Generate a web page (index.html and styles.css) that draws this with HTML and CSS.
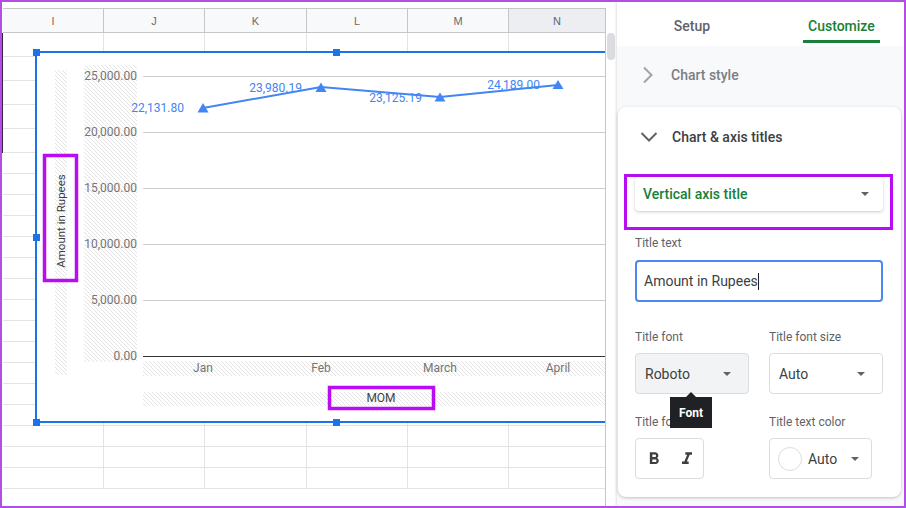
FILE: index.html
```html
<!DOCTYPE html>
<html lang="en">
<head>
    <meta charset="UTF-8">
    <meta name="viewport" content="width=device-width, initial-scale=1.0">
    <title>Chart editor - Customize</title>
    <link rel="stylesheet" href="styles.css">
</head>
<body>
<div class="frame">
    <div class="sheet">
        <div class="sel-bar"></div>
        <div class="grid">
            <div class="col-heads">
                <div class="ch w1 red">I</div>
                <div class="ch w2">J</div>
                <div class="ch w3">K</div>
                <div class="ch w4 red">L</div>
                <div class="ch w5">M</div>
                <div class="ch w6 picked">N</div>
            </div>
            <div class="rows">
                <div class="row tall"><span class="w1"></span><span class="w2"></span><span class="w3"></span><span class="w4"></span><span class="w5"></span><span class="w6"></span></div>
                <div class="row tall"><span class="w1"></span><span class="w2"></span><span class="w3"></span><span class="w4"></span><span class="w5"></span><span class="w6"></span></div>
                <div class="row tall"><span class="w1"></span><span class="w2"></span><span class="w3"></span><span class="w4"></span><span class="w5"></span><span class="w6"></span></div>
                <div class="row tall"><span class="w1"></span><span class="w2"></span><span class="w3"></span><span class="w4"></span><span class="w5"></span><span class="w6"></span></div>
                <div class="row tall"><span class="w1"></span><span class="w2"></span><span class="w3"></span><span class="w4"></span><span class="w5"></span><span class="w6"></span></div>
                <div class="row"><span class="w1"></span><span class="w2"></span><span class="w3"></span><span class="w4"></span><span class="w5"></span><span class="w6"></span></div>
                <div class="row"><span class="w1"></span><span class="w2"></span><span class="w3"></span><span class="w4"></span><span class="w5"></span><span class="w6"></span></div>
                <div class="row"><span class="w1"></span><span class="w2"></span><span class="w3"></span><span class="w4"></span><span class="w5"></span><span class="w6"></span></div>
                <div class="row"><span class="w1"></span><span class="w2"></span><span class="w3"></span><span class="w4"></span><span class="w5"></span><span class="w6"></span></div>
                <div class="row"><span class="w1"></span><span class="w2"></span><span class="w3"></span><span class="w4"></span><span class="w5"></span><span class="w6"></span></div>
                <div class="row"><span class="w1"></span><span class="w2"></span><span class="w3"></span><span class="w4"></span><span class="w5"></span><span class="w6"></span></div>
                <div class="row"><span class="w1"></span><span class="w2"></span><span class="w3"></span><span class="w4"></span><span class="w5"></span><span class="w6"></span></div>
                <div class="row"><span class="w1"></span><span class="w2"></span><span class="w3"></span><span class="w4"></span><span class="w5"></span><span class="w6"></span></div>
                <div class="row"><span class="w1"></span><span class="w2"></span><span class="w3"></span><span class="w4"></span><span class="w5"></span><span class="w6"></span></div>
                <div class="row"><span class="w1"></span><span class="w2"></span><span class="w3"></span><span class="w4"></span><span class="w5"></span><span class="w6"></span></div>
                <div class="row"><span class="w1"></span><span class="w2"></span><span class="w3"></span><span class="w4"></span><span class="w5"></span><span class="w6"></span></div>
                <div class="row"><span class="w1"></span><span class="w2"></span><span class="w3"></span><span class="w4"></span><span class="w5"></span><span class="w6"></span></div>
                <div class="row"><span class="w1"></span><span class="w2"></span><span class="w3"></span><span class="w4"></span><span class="w5"></span><span class="w6"></span></div>
                <div class="row"><span class="w1"></span><span class="w2"></span><span class="w3"></span><span class="w4"></span><span class="w5"></span><span class="w6"></span></div>
                <div class="row"><span class="w1"></span><span class="w2"></span><span class="w3"></span><span class="w4"></span><span class="w5"></span><span class="w6"></span></div>
                <div class="row"><span class="w1"></span><span class="w2"></span><span class="w3"></span><span class="w4"></span><span class="w5"></span><span class="w6"></span></div>
            </div>

            <!-- embedded chart, floats over the cells -->
            <div class="chart">
                <svg class="plot" width="620" height="368">
                    <defs>
                        <pattern id="hatch" width="4" height="4" patternUnits="userSpaceOnUse">
                            <path d="M-1,-1 l2,2 M0,0 l4,4 M3,3 l2,2" stroke="#e4e4e4" stroke-width="1"/>
                        </pattern>
                    </defs>
                    <g transform="translate(-37 -53)">
                        <rect x="55" y="70" width="12" height="305" fill="url(#hatch)"/>
                        <rect x="84" y="65" width="53" height="297" fill="url(#hatch)"/>
                        <rect x="143" y="361" width="470" height="15" fill="url(#hatch)"/>
                        <rect x="143" y="392" width="470" height="14" fill="url(#hatch)"/>

                        <path d="M143 76.5H640M143 132.5H640M143 188.5H640M143 244.5H640M143 300.5H640" stroke="#cccccc" stroke-width="1"/>
                        <path d="M143 356.5H640" stroke="#333333" stroke-width="1"/>

                        <g class="ylab">
                            <text x="137" y="79.5">25,000.00</text>
                            <text x="137" y="135.5">20,000.00</text>
                            <text x="137" y="191.5">15,000.00</text>
                            <text x="137" y="247.5">10,000.00</text>
                            <text x="137" y="303.5">5,000.00</text>
                            <text x="137" y="359.5">0.00</text>
                        </g>
                        <g class="xlab">
                            <text x="203" y="371.5">Jan</text>
                            <text x="321" y="371.5">Feb</text>
                            <text x="440" y="371.5">March</text>
                            <text x="558" y="371.5">April</text>
                        </g>

                        <polyline points="203,108 321,87 440,97 558,85" fill="none" stroke="#4285f4" stroke-width="2"/>
                        <g fill="#4285f4">
                            <path d="M203 103L208.5 112.5H197.5Z"/>
                            <path d="M321 82.5L326.5 92H315.5Z"/>
                            <path d="M440 92.5L445.5 101.5H434.5Z"/>
                            <path d="M558 80L563.5 89H552.5Z"/>
                        </g>
                        <g class="dlab">
                            <text x="184" y="112">22,131.80</text>
                            <text x="302" y="92">23,980.19</text>
                            <text x="422" y="101.5">23,125.19</text>
                            <text x="540" y="88.5">24,189.00</text>
                        </g>

                        <text class="vtitle" transform="translate(64.5 221) rotate(-90)">Amount in Rupees</text>
                        <rect class="mark" x="44.5" y="155.5" width="32" height="125"/>

                        <text class="htitle" x="381" y="402">MOM</text>
                        <rect class="mark" x="329.5" y="387.5" width="104" height="21"/>
                    </g>
                </svg>
                <span class="handle h-tl"></span>
                <span class="handle h-tm"></span>
                <span class="handle h-lm"></span>
                <span class="handle h-bl"></span>
                <span class="handle h-bm"></span>
            </div>
        </div>
        <div class="vscroll"><div class="thumb"></div></div>
    </div>

    <aside class="panel">
        <div class="tabs">
            <div class="tab">Setup</div>
            <div class="tab active">Customize</div>
        </div>

        <div class="section-row closed">
            <svg class="chev" width="24" height="24" viewBox="0 0 24 24"><path d="M8 4.5L15.5 12L8 19.5" fill="none" stroke="#a0a4a8" stroke-width="2"/></svg>
            <span>Chart style</span>
        </div>

        <div class="card">
            <div class="section-row">
                <svg class="chev" width="24" height="24" viewBox="0 0 24 24"><path d="M4.5 8L12 15.5L19.5 8" fill="none" stroke="#5f6368" stroke-width="2"/></svg>
                <span>Chart &amp; axis titles</span>
            </div>

            <div class="card-body">
                <div class="highlight">
                    <div class="dropdown">
                        <span>Vertical axis title</span>
                        <i class="caret"></i>
                    </div>
                </div>

                <div class="label first">Title text</div>
                <div class="text-input">Amount in Rupees<i class="cursor"></i></div>

                <div class="two-col">
                    <div>
                        <div class="label">Title font</div>
                        <div class="select grey">
                            <span>Roboto</span><i class="caret"></i>
                            <div class="tooltip">Font</div>
                        </div>
                    </div>
                    <div>
                        <div class="label">Title font size</div>
                        <div class="select"><span>Auto</span><i class="caret"></i></div>
                    </div>
                    <div>
                        <div class="label">Title format</div>
                        <div class="format-box">
                            <svg width="20" height="20" viewBox="0 0 24 24"><path fill="#3c4043" d="M15.6 10.79c.97-.67 1.65-1.77 1.65-2.79 0-2.26-1.75-4-4-4H7v14h7.04c2.09 0 3.710-1.7 3.71-3.79 0-1.52-.86-2.82-2.15-3.42zM10 6.5h3c.83 0 1.5.67 1.5 1.5s-.67 1.5-1.5 1.5h-3v-3zm3.5 9H10v-3h3.5c.83 0 1.5.67 1.5 1.5s-.67 1.5-1.5 1.5z"/></svg>
                            <svg width="20" height="20" viewBox="0 0 24 24"><path fill="#3c4043" d="M10 4v3h2.21l-3.42 8H6v3h8v-3h-2.21l3.42-8H18V4z"/></svg>
                        </div>
                    </div>
                    <div>
                        <div class="label">Title text color</div>
                        <div class="color-box">
                            <span class="swatch"></span>
                            <span>Auto</span>
                            <i class="caret"></i>
                        </div>
                    </div>
                </div>
            </div>
        </div>
    </aside>
</div>
</body>
</html>
```

FILE: styles.css
```css
* {
    box-sizing: border-box;
}

body {
    margin: 0;
    font-family: Roboto, 'Liberation Sans', sans-serif;
    background-color: #fff;
}

.frame {
    width: 906px;
    height: 508px;
    border: 2px solid #b34ee2;
    display: flex;
    overflow: hidden;
    background-color: #fff;
}

/* ---------- spreadsheet side ---------- */

.sheet {
    position: relative;
    flex: none;
    width: 615px;
    padding-top: 6px;
    display: flex;
}

.sel-bar {
    position: absolute;
    left: 0;
    top: 31px;
    width: 1px;
    height: 120px;
    background-color: #3a2346;
}

.grid {
    position: relative;
    margin-left: 1px;
    width: 603px;
    border-right: 1px solid #c6c6c6;
    overflow: hidden;
}

.w1 { width: 101px; }
.w2 { width: 101px; }
.w3 { width: 102px; }
.w4 { width: 101px; }
.w5 { width: 101px; }
.w6 { flex: 1; border-right: none !important; }

.col-heads {
    display: flex;
    height: 25px;
    border-top: 1px solid #c6c6c6;
    border-bottom: 1px solid #c6c6c6;
    background-color: #f8f9fa;
}

.ch {
    display: flex;
    align-items: center;
    justify-content: center;
    border-right: 1px solid #c6c6c6;
    font: 11px 'Liberation Sans', Arial, sans-serif;
    color: #6b6b6b;
}

.ch.red {
    color: #9c5a52;
}

.ch.picked {
    background-color: #eceef1;
    color: #5a6580;
}

.row {
    display: flex;
    height: 21px;
    border-bottom: 1px solid #e2e3e3;
}

.row.tall {
    height: 24px;
}

.row span {
    border-right: 1px solid #e2e3e3;
}

.vscroll {
    flex: none;
    width: 11px;
}

.thumb {
    margin: 25px 0 0 1px;
    width: 8px;
    height: 27px;
    border-radius: 4px;
    background-color: #dadce0;
}

/* ---------- chart ---------- */

.chart {
    position: absolute;
    left: 32px;
    top: 43px;
    width: 650px;
    height: 372px;
    border: 2px solid #1a73e8;
    background-color: #fff;
}

.plot {
    display: block;
    font-family: Roboto, sans-serif;
    font-size: 12px;
}

.ylab text {
    fill: #757575;
    text-anchor: end;
}

.xlab text {
    fill: #757575;
    text-anchor: middle;
}

.dlab text {
    fill: #4285f4;
    text-anchor: end;
}

.vtitle {
    fill: #3a3a3a;
    font-size: 11.5px;
    text-anchor: middle;
}

.htitle {
    fill: #444;
    text-anchor: middle;
}

.mark {
    fill: none;
    stroke: #b80cf2;
    stroke-width: 3.5;
}

.handle {
    position: absolute;
    width: 7px;
    height: 7px;
    background-color: #1a73e8;
}

.h-tl { left: -4px; top: -4px; }
.h-tm { left: 296px; top: -4px; }
.h-lm { left: -4px; top: 181px; }
.h-bl { left: -4px; top: 366px; }
.h-bm { left: 296px; top: 366px; }

/* ---------- editor panel ---------- */

.panel {
    position: relative;
    z-index: 1;
    flex: 1;
    background-color: #f8f9fa;
    box-shadow: -1px 0 2px rgba(0, 0, 0, 0.12);
}

.tabs {
    display: flex;
    height: 44px;
    background-color: #fff;
}

.tab {
    height: 41px;
    padding-top: 16px;
    border-bottom: 3px solid transparent;
    font-size: 14px;
    font-weight: 500;
    color: #5f6368;
    width: 150px;
    text-align: center;
}

.tab.active {
    width: auto;
    margin-left: 36px;
    padding: 16px 5px 0;
    color: #188038;
    border-bottom-color: #188038;
    border-radius: 2px 2px 0 0;
}

.section-row {
    display: flex;
    align-items: center;
    height: 58px;
    padding-left: 19px;
    font-size: 14px;
    font-weight: 500;
    color: #3c4043;
}

.section-row.closed {
    color: #7a7e83;
    margin-bottom: 3px;
}

.card .section-row {
    height: 60px;
}

.chev {
    margin-right: 11px;
}

.card {
    margin: 0 3px 0 1px;
    background-color: #fff;
    border-radius: 8px;
    box-shadow: 0 1px 3px rgba(60, 64, 67, 0.3);
}

.card-body {
    padding: 0 18px 18px 17px;
}

.highlight {
    margin: 7px -10px 0 -11px;
    padding: 0 7px 16px 8px;
    border: 3px solid #b80cf2;
}

.dropdown {
    display: flex;
    align-items: center;
    justify-content: space-between;
    height: 34px;
    padding: 0 14px 0 8px;
    border-radius: 4px;
    box-shadow: 0 1px 3px rgba(60, 64, 67, 0.28);
    font-size: 14px;
    font-weight: 500;
    color: #188038;
}

.caret {
    width: 0;
    height: 0;
    border-left: 4px solid transparent;
    border-right: 4px solid transparent;
    border-top: 4px solid #5f6368;
}

.label {
    font-size: 12px;
    line-height: 16px;
    color: #5f6368;
    margin: 20px 0 8px;
    white-space: nowrap;
}

.label.first {
    margin: 5px 0 9px;
}

.text-input {
    display: flex;
    align-items: center;
    height: 42px;
    padding-left: 7px;
    border: 2px solid #4a89f3;
    border-radius: 4px;
    font-size: 14px;
    color: #3c4043;
}

.cursor {
    width: 1px;
    height: 17px;
    background-color: #202124;
}

.two-col {
    display: grid;
    grid-template-columns: 114px 114px;
    column-gap: 20px;
}

.two-col > div:nth-child(1),
.two-col > div:nth-child(2) {
    padding-top: 7px;
}

.select {
    position: relative;
    display: flex;
    align-items: center;
    justify-content: space-between;
    height: 41px;
    padding: 0 17px 0 9px;
    border: 1px solid #dadce0;
    border-radius: 4px;
    font-size: 14px;
    color: #3c4043;
}

.select.grey {
    background-color: #f1f3f4;
}

/* hover tooltip sits over the label below it */
.tooltip {
    position: absolute;
    z-index: 2;
    left: 34px;
    top: 43px;
    width: 42px;
    height: 31px;
    background-color: #202124;
    color: #fff;
    font-size: 12px;
    font-weight: 700;
    display: flex;
    align-items: center;
    justify-content: center;
}

.tooltip::before {
    content: "";
    position: absolute;
    left: 16px;
    top: -5px;
    border-left: 5px solid transparent;
    border-right: 5px solid transparent;
    border-bottom: 5px solid #202124;
}

.format-box {
    display: flex;
    align-items: center;
    gap: 13px;
    width: 69px;
    height: 41px;
    padding-left: 8px;
    border: 1px solid #dadce0;
    border-radius: 4px;
}

.color-box {
    display: flex;
    align-items: center;
    width: 103px;
    height: 41px;
    padding-left: 8px;
    border: 1px solid #dadce0;
    border-radius: 4px;
    font-size: 14px;
    color: #3c4043;
}

.swatch {
    width: 24px;
    height: 24px;
    border-radius: 50%;
    border: 1px solid #dadce0;
    margin-right: 6px;
}

.color-box .caret {
    margin-left: 14px;
}
```
